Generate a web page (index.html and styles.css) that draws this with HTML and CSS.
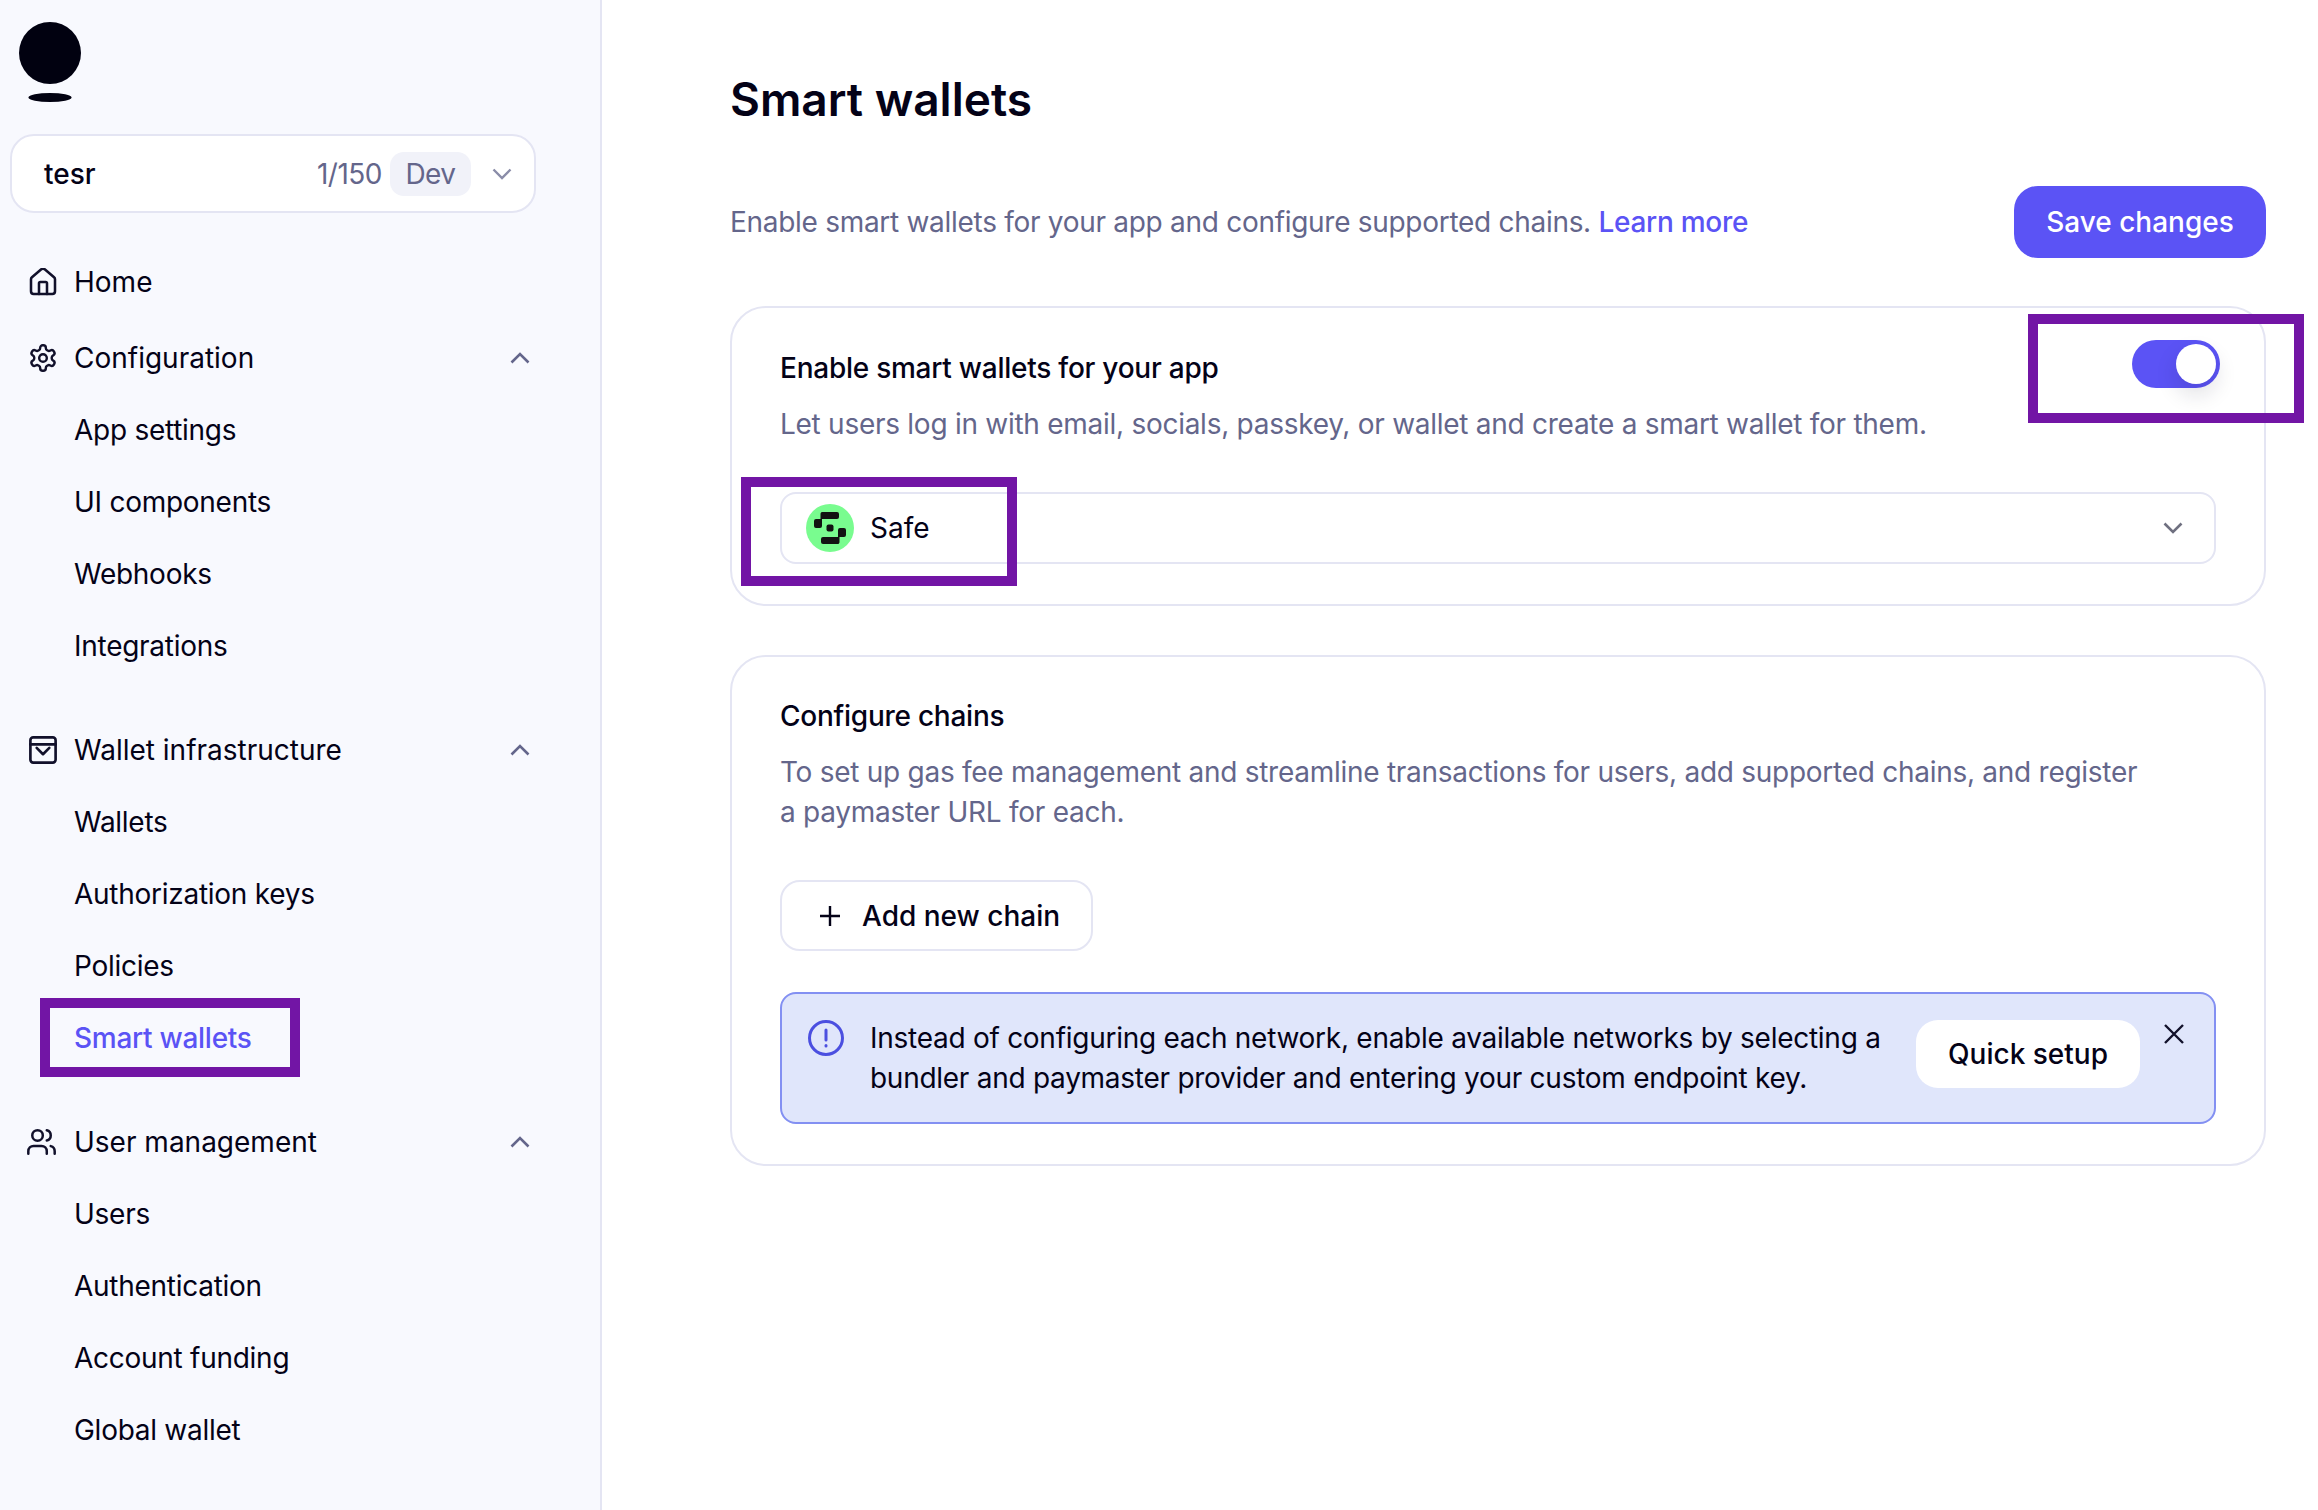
FILE: index.html
```html
<!DOCTYPE html>
<html lang="en">
<head>
<meta charset="utf-8">
<title>Smart wallets</title>
<link rel="stylesheet" href="styles.css">
</head>
<body>
<div class="app">
  <aside class="sidebar">
    <svg class="logo" viewBox="0 0 62 80"><ellipse cx="31" cy="31" rx="31" ry="31" fill="#010110"/><ellipse cx="31" cy="75.5" rx="21.5" ry="4.5" fill="#010110"/></svg>
    <div class="app-select">
      <span class="app-name">tesr</span>
      <span class="app-count">1/150</span>
      <span class="app-badge">Dev</span>
      <svg class="app-chev" viewBox="0 0 20 12"><path d="M1.5 1.5 10 10l8.5-8.5"/></svg>
    </div>
    <nav class="nav">
      <a class="nav-row home">
        <svg class="nav-icon" viewBox="2 1.5 20 21"><path d="M15 21v-8a1 1 0 0 0-1-1h-4a1 1 0 0 0-1 1v8"/><path d="M3 10a2 2 0 0 1 .709-1.528l7-5.999a2 2 0 0 1 2.582 0l7 5.999A2 2 0 0 1 21 10v9a2 2 0 0 1-2 2H5a2 2 0 0 1-2-2z"/></svg>
        <span>Home</span>
      </a>
      <div class="nav-group">
        <a class="nav-row">
          <svg class="nav-icon" viewBox="1.5 1 21 22"><path d="M12.22 2h-.44a2 2 0 0 0-2 2v.18a2 2 0 0 1-1 1.73l-.43.25a2 2 0 0 1-2 0l-.15-.08a2 2 0 0 0-2.73.73l-.22.38a2 2 0 0 0 .73 2.73l.15.1a2 2 0 0 1 1 1.72v.51a2 2 0 0 1-1 1.74l-.15.09a2 2 0 0 0-.73 2.73l.22.38a2 2 0 0 0 2.73.73l.15-.08a2 2 0 0 1 2 0l.43.25a2 2 0 0 1 1 1.73V20a2 2 0 0 0 2 2h.44a2 2 0 0 0 2-2v-.18a2 2 0 0 1 1-1.73l.43-.25a2 2 0 0 1 2 0l.15.08a2 2 0 0 0 2.73-.73l.22-.39a2 2 0 0 0-.73-2.73l-.15-.08a2 2 0 0 1-1-1.74v-.5a2 2 0 0 1 1-1.74l.15-.09a2 2 0 0 0 .73-2.73l-.22-.38a2 2 0 0 0-2.73-.73l-.15.08a2 2 0 0 1-2 0l-.43-.25a2 2 0 0 1-1-1.73V4a2 2 0 0 0-2-2z"/><circle cx="12" cy="12" r="3"/></svg>
          <span class="nav-label">Configuration</span>
          <svg class="nav-chev" viewBox="0 0 20 12"><path d="M1.5 10.5 10 2l8.5 8.5"/></svg>
        </a>
        <a class="nav-sub">App settings</a>
        <a class="nav-sub">UI components</a>
        <a class="nav-sub">Webhooks</a>
        <a class="nav-sub">Integrations</a>
      </div>
      <div class="nav-group">
        <a class="nav-row">
          <svg class="nav-icon" viewBox="2 2 20 20"><rect x="3" y="3" width="18" height="18" rx="2"/><path d="M3 8h18"/><path d="M7.5 10.500 12 15l4.500-4.500"/></svg>
          <span class="nav-label">Wallet infrastructure</span>
          <svg class="nav-chev" viewBox="0 0 20 12"><path d="M1.5 10.5 10 2l8.5 8.5"/></svg>
        </a>
        <a class="nav-sub">Wallets</a>
        <a class="nav-sub">Authorization keys</a>
        <a class="nav-sub">Policies</a>
        <a class="nav-sub active">Smart wallets<span class="mark mark-nav"></span></a>
      </div>
      <div class="nav-group last">
        <a class="nav-row tall">
          <svg class="nav-icon users" viewBox="1 2 22 20"><path d="M16 21v-2a4 4 0 0 0-4-4H6a4 4 0 0 0-4 4v2"/><circle cx="9" cy="7" r="4"/><path d="M22 21v-2a4 4 0 0 0-3-3.87"/><path d="M16 3.13a4 4 0 0 1 0 7.75"/></svg>
          <span class="nav-label">User management</span>
          <svg class="nav-chev" viewBox="0 0 20 12"><path d="M1.5 10.5 10 2l8.5 8.5"/></svg>
        </a>
        <a class="nav-sub">Users</a>
        <a class="nav-sub">Authentication</a>
        <a class="nav-sub">Account funding</a>
        <a class="nav-sub">Global wallet</a>
      </div>
    </nav>
  </aside>
  <main class="main">
    <h1 class="title">Smart wallets</h1>
    <div class="intro">
      <p class="intro-text">Enable smart wallets for your app and configure supported chains. <a class="link">Learn more</a></p>
      <button class="btn-primary">Save changes</button>
    </div>
    <section class="card card-enable">
      <div class="card-head">
        <div>
          <h2 class="card-title">Enable smart wallets for your app</h2>
          <p class="card-desc">Let users log in with email, socials, passkey, or wallet and create a smart wallet for them.</p>
        </div>
        <span class="toggle"><span class="knob"></span></span>
      </div>
      <span class="mark mark-toggle"></span>
      <div class="select">
        <svg class="safe" viewBox="0 0 48 48"><circle cx="24" cy="24" r="24" fill="#79fc8f"/><path fill="#121312" d="M17 8h14a2 2 0 0 1 2 2v3a2 2 0 0 1-2 2H16v7a2 2 0 0 1-2 2h-4a2 2 0 0 1-2-2v-5a2 2 0 0 1 2-2h4.500v-5a2 2 0 0 1 2.500-2z"/><path fill="#121312" transform="rotate(180 24 24)" d="M17 8h14a2 2 0 0 1 2 2v3a2 2 0 0 1-2 2H16v7a2 2 0 0 1-2 2h-4a2 2 0 0 1-2-2v-5a2 2 0 0 1 2-2h4.500v-5a2 2 0 0 1 2.500-2z"/><rect x="20.500" y="20.500" width="7" height="7" rx="2" fill="#121312"/></svg>
        <span class="select-value">Safe</span>
        <svg class="select-chev" viewBox="0 0 20 12"><path d="M1.500 1.500 10 10l8.500-8.500"/></svg>
        <span class="mark mark-safe"></span>
      </div>
    </section>
    <section class="card card-chains">
      <h2 class="card-title">Configure chains</h2>
      <p class="card-desc narrow">To set up gas fee management and streamline transactions for users, add supported chains, and register a paymaster URL for each.</p>
      <button class="btn-add">
        <svg class="plus" viewBox="0 0 22 22"><path d="M11 1v20M1 11h20"/></svg>
        Add new chain
      </button>
      <div class="banner">
        <svg class="info" viewBox="0 0 36 36"><circle cx="18" cy="18" r="16.500"/><path d="M18 10v10"/><path d="M18 25.500v.5"/></svg>
        <p class="banner-text">Instead of configuring each network, enable available networks by selecting a bundler and paymaster provider and entering your custom endpoint key.</p>
        <button class="btn-quick">Quick setup</button>
        <svg class="close" viewBox="0 0 24 24"><path d="M3 3l18 18M21 3 3 21"/></svg>
      </div>
    </section>
  </main>
</div>
</body>
</html>
```

FILE: styles.css
```css
* { box-sizing: border-box; }
html, body { margin: 0; height: 1510px; overflow: hidden; background: #fff; }
body { font-family: "Inter", "Liberation Sans", sans-serif; font-size: 28px; color: #040217; }
p, h1, h2 { margin: 0; }
button { font-family: inherit; cursor: pointer; }

.app { display: flex; height: 1510px; }

.sidebar { width: 602px; flex: none; background: #f8f9fe; border-right: 2px solid #e4e5f3; padding: 22px 0 0 11px; }
.logo { display: block; width: 62px; height: 80px; margin-left: 8px; }

.app-select { display: flex; align-items: center; width: 526px; height: 79px; margin: 32px 0 0 -1px; padding: 0 22px 0 32px; background: #fff; border: 2px solid #e4e5f3; border-radius: 24px; }
.app-name { flex: 1; font-weight: 500; }
.app-count { color: #64668b; letter-spacing: -.5px; }
.app-badge { margin-left: 8px; width: 81px; height: 44px; line-height: 44px; text-align: center; background: #f1f2f9; border-radius: 14px; color: #64668b; letter-spacing: -.5px; }
.app-chev { width: 20px; height: 12px; margin-left: 21px; fill: none; stroke: #8a8ca8; stroke-width: 2.4; }

.nav { margin-top: 33px; width: 524px; }
.nav-group { margin-bottom: 32px; }
.nav-group.last { margin-top: -1px; }
.nav-row { display: flex; align-items: center; height: 72px; padding: 0 5px 0 18px; }
.nav-row.home { margin: 1px 0 4px; }
.nav-row.tall { height: 73px; }
.nav-icon { width: 28px; height: 28px; flex: none; margin-right: 17px; fill: none; stroke: #12112b; stroke-width: 1.9; stroke-linecap: round; stroke-linejoin: round; }
.nav-icon.users { width: 29px; margin-left: -2px; margin-right: 18px; }
.nav-label { flex: 1; }
.nav-chev { width: 20px; height: 12px; fill: none; stroke: #64668b; stroke-width: 2.6; }
.nav-sub { position: relative; display: flex; align-items: center; height: 72px; padding-left: 63px; letter-spacing: -.27px; }
.nav-sub.active { color: #5b53f5; font-weight: 500; }

.mark { position: absolute; box-sizing: border-box; border: 10px solid #7215a5; pointer-events: none; }
.mark-nav { left: 29px; top: -4px; width: 260px; height: 79px; }
.mark-toggle { left: 1296px; top: 6px; width: 276px; height: 109px; }
.mark-safe { left: -41px; top: -17px; width: 276px; height: 109px; }

.main { flex: 1; min-width: 0; padding: 70px 52px 0 128px; }
.title { font-size: 46px; font-weight: 600; line-height: 58px; }
.intro { display: flex; align-items: center; justify-content: space-between; margin-top: 58px; }
.intro-text { color: #64668b; letter-spacing: -.29px; }
.link { color: #5b53f5; font-weight: 500; }
.btn-primary { width: 252px; height: 72px; border: 0; border-radius: 24px; background: #5b53f5; color: #fff; font-size: 28px; font-weight: 500; }

.card { position: relative; background: #fff; border: 2px solid #e4e5f3; border-radius: 36px; padding: 39px 48px 40px; }
.card-enable { margin-top: 48px; padding-top: 40px; }
.card-chains { margin-top: 49px; }
.card-head { display: flex; justify-content: space-between; align-items: flex-start; }
.card-title { font-size: 28px; font-weight: 500; line-height: 40px; letter-spacing: -.25px; }
.card-desc { margin-top: 16px; color: #64668b; line-height: 40px; letter-spacing: -.27px; }
.card-desc.narrow { max-width: 1370px; }

.toggle { position: relative; display: block; flex: none; width: 88px; height: 48px; margin: -8px -4px 0 0; background: #5b53f5; border-radius: 24px; }
.knob { position: absolute; right: 4px; top: 4px; width: 40px; height: 40px; background: #fff; border-radius: 50%; box-shadow: 0 10px 22px rgba(20, 20, 50, .14); }

.select { position: relative; display: flex; align-items: center; height: 72px; margin-top: 48px; padding: 0 31px 0 24px; border: 2px solid #e4e5f3; border-radius: 16px; }
.safe { width: 48px; height: 48px; flex: none; }
.select-value { flex: 1; margin-left: 16px; }
.select-chev { width: 20px; height: 12px; fill: none; stroke: #6f7080; stroke-width: 2.6; }

.btn-add { display: flex; align-items: center; width: 313px; height: 71px; margin-top: 48px; padding: 0 0 0 37px; background: #fff; border: 2px solid #e4e5f3; border-radius: 20px; color: #040217; font-size: 28px; font-weight: 500; }
.plus { width: 22px; height: 22px; margin-right: 21px; fill: none; stroke: #040217; stroke-width: 2.400; }

.banner { display: flex; align-items: flex-start; height: 132px; margin-top: 41px; padding: 24px 28px 0 26px; background: #e0e6fb; border: 2px solid #8390f2; border-radius: 16px; }
.info { width: 36px; height: 36px; flex: none; margin: 2px 26px 0 0; fill: none; stroke: #4b4fe0; stroke-width: 3; stroke-linecap: round; }
.banner-text { flex: 1; line-height: 40px; letter-spacing: -.27px; }
.btn-quick { flex: none; width: 224px; height: 68px; margin: 2px 0 0 20px; background: #fff; border: 0; border-radius: 22px; color: #040217; font-size: 28px; font-weight: 500; }
.close { width: 24px; height: 24px; flex: none; margin: 4px 0 0 22px; fill: none; stroke: #12112b; stroke-width: 2.400; }
```
